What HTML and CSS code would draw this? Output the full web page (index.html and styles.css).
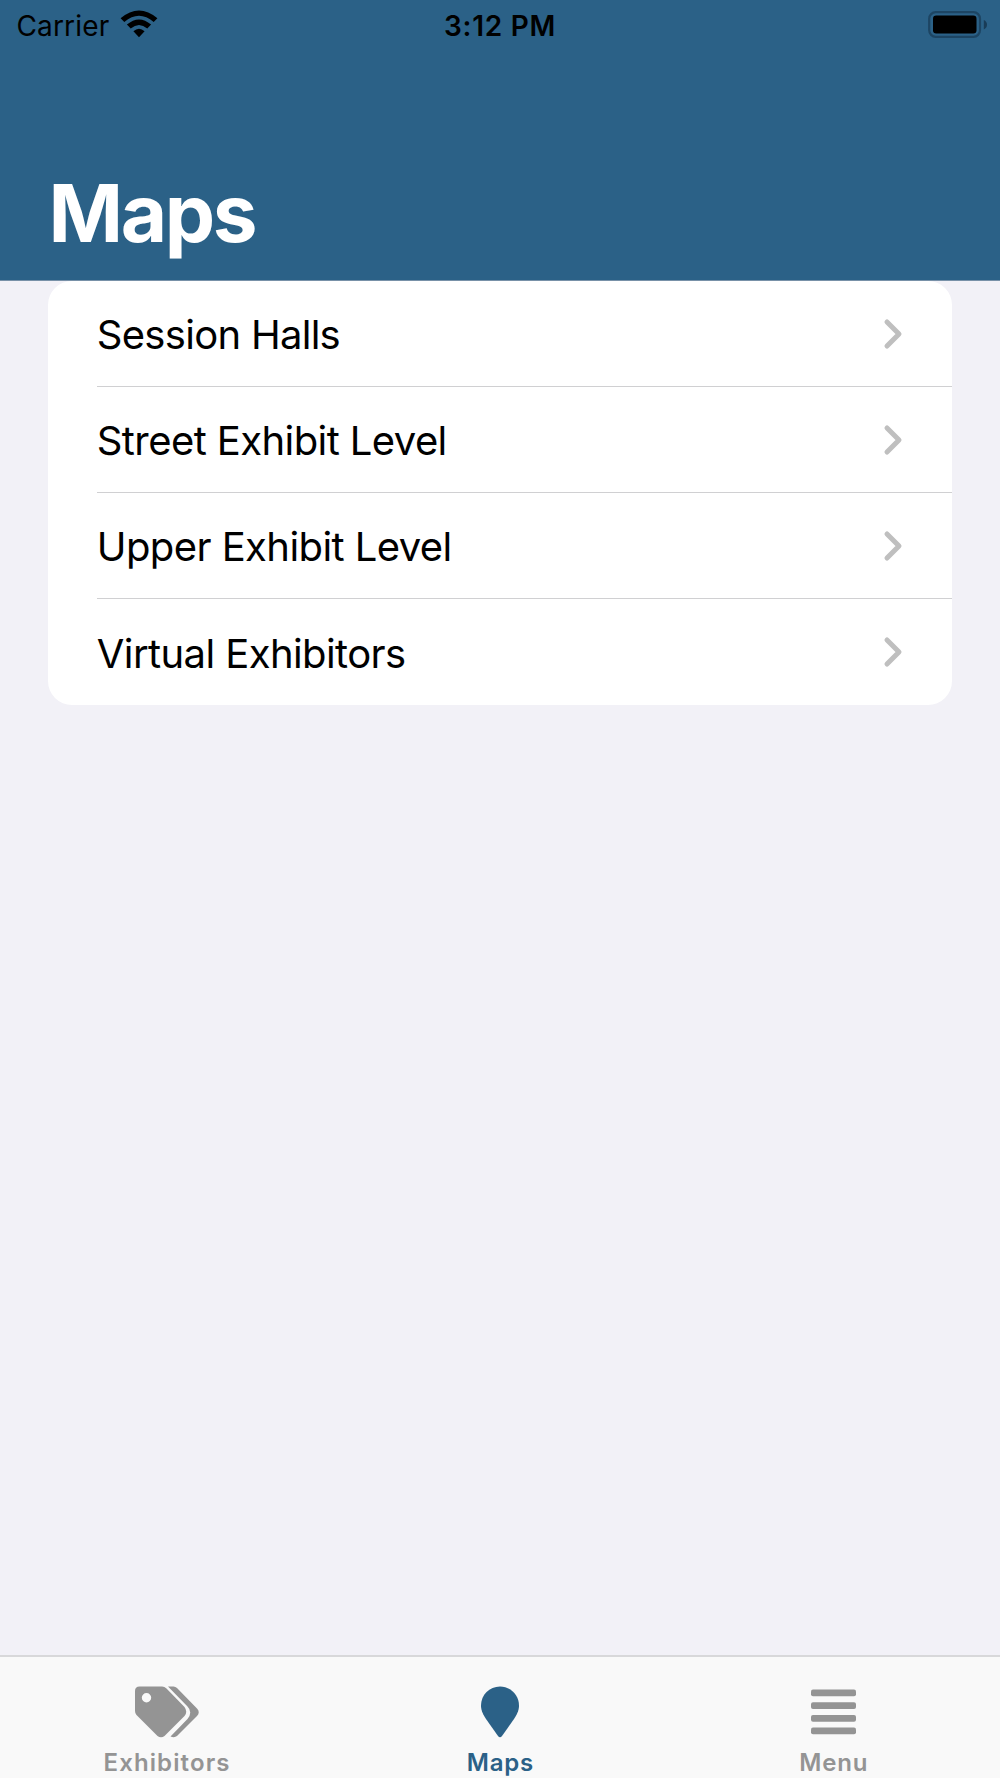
FILE: index.html
```html
<!DOCTYPE html>
<html lang="en">
<head>
<meta charset="utf-8">
<title>Maps</title>
<link rel="stylesheet" href="styles.css">
</head>
<body>
<div class="app">
  <header class="header">
    <div class="status">
      <div class="status-left">
        <span class="carrier">Carrier</span>
        <svg class="wifi" width="38" height="28" viewBox="0 0 38 28">
          <path d="M19 27.2 13.4 21.2Q19 16.2 24.6 21.2ZM6.9 14.6Q19 4.3 31.1 14.6L27.3 18.6Q19 11.3 10.7 18.6ZM.6 8.3Q19-7.3 37.4 8.3L33.7 12.1Q19-.4 4.3 12.1Z"/>
        </svg>
      </div>
      <span class="time">3:12 PM</span>
      <svg class="battery" width="60" height="28" viewBox="0 0 60 28">
        <rect x="1.2" y="1.2" width="50.8" height="24.6" rx="6.5" fill="none" stroke="#1d4563" stroke-width="2.2"/>
        <rect x="5" y="4.500" width="43.5" height="18" rx="3.2"/>
        <path d="M55.8 9Q59 10.5 59 13.7T55.8 18.4Z" fill="#193c57"/>
      </svg>
    </div>
    <h1 class="title">Maps</h1>
  </header>
  <main class="content">
    <ul class="list">
      <li class="row"><span class="label wide">Session Halls</span><svg class="chevron" width="20" height="32" viewBox="0 0 20 32"><path d="M4 4 16 16 4 28"/></svg></li>
      <li class="row"><span class="label">Street Exhibit Level</span><svg class="chevron" width="20" height="32" viewBox="0 0 20 32"><path d="M4 4 16 16 4 28"/></svg></li>
      <li class="row"><span class="label">Upper Exhibit Level</span><svg class="chevron" width="20" height="32" viewBox="0 0 20 32"><path d="M4 4 16 16 4 28"/></svg></li>
      <li class="row"><span class="label">Virtual Exhibitors</span><svg class="chevron" width="20" height="32" viewBox="0 0 20 32"><path d="M4 4 16 16 4 28"/></svg></li>
    </ul>
  </main>
  <nav class="tabs">
    <a class="tab">
      <svg width="64" height="52" viewBox="0 0 64 52"><path fill-rule="evenodd" d="M4.500 .500H27Q29.500 .500 31.500 2.500L49.500 21Q53 26 49.500 30L29.500 50Q26 52.500 22.500 50L1.500 29Q0 27.500 0 25V5Q0 .500 4.500 .500ZM11.500 7A4.700 4.700 0 1 0 11.500 16.400 4.700 4.700 0 1 0 11.500 7Z"/><path d="M33 .500H38.500Q40.500 .500 42 2L62 22.500Q65.500 26 62 30L42 50Q39.500 52 35.500 50.500L52.500 33Q58 26 52.500 20.500Z"/></svg>
      <span class="tab-label long">Exhibitors</span>
    </a>
    <a class="tab active">
      <svg width="38" height="52" viewBox="0 0 38 52"><path d="M19 .500C29.500 .500 38 9 38 19.500 38 25 35.500 29 33 33L21 50Q19 52.500 17 50L5 33C2.500 29 0 25 0 19.500 0 9 8.500 .500 19 .500Z"/></svg>
      <span class="tab-label">Maps</span>
    </a>
    <a class="tab">
      <svg width="45" height="52" viewBox="0 0 45 52"><rect y="3.500" width="45" height="6.800" rx="2"/><rect y="16.200" width="45" height="6.800" rx="2"/><rect y="28.900" width="45" height="6.800" rx="2"/><rect y="41.500" width="45" height="6.800" rx="2"/></svg>
      <span class="tab-label">Menu</span>
    </a>
  </nav>
</div>
</body>
</html>
```
FILE: styles.css
```css
* { box-sizing: border-box; }
body { margin: 0; background: #f2f1f7; color: #000; font-family: Inter, "Liberation Sans", sans-serif; }
.app { display: flex; flex-direction: column; height: 1778px; overflow: hidden; }
.header { display: flex; flex-direction: column; justify-content: space-between; height: 281px; background: #2b6187; border-bottom: 1px solid #7891a8; }
.status { display: grid; grid-template-columns: 1fr auto 1fr; align-items: center; height: 50px; padding: 0 16px; font-size: 28px; line-height: 48px; }
.status-left { display: flex; align-items: center; gap: 10.500px; }
.carrier { padding: 2px 0 0 0.500px; letter-spacing: 0.15px; }
.wifi { margin-bottom: 2px; }
.time { padding-top: 2px; font-weight: 600; letter-spacing: 0.75px; }
.battery { justify-self: end; margin-right: -4px; }
.title { margin: 0 0 17px; padding-left: 48.500px; color: #fff; font-size: 80px; font-weight: 700; line-height: 100px; letter-spacing: -2.4px; }
.content { flex: 1; padding: 0 48.300px; }
.list { margin: 0; padding: 0; list-style: none; background: #fff; border-radius: 24px; }
.row { display: flex; align-items: center; justify-content: space-between; height: 106px; margin-left: 48.500px; padding-right: 48.700px; border-bottom: 1px solid #d0d0d2; font-size: 40px; }
.row:last-child { border-bottom: 0; }
.label { margin-top: 2px; letter-spacing: -0.59px; }
.wide { letter-spacing: -0.71px; }
.chevron { fill: none; stroke: #bfbfbf; stroke-width: 5; stroke-linecap: round; stroke-linejoin: round; }
.tabs { display: grid; grid-template-columns: repeat(3, 1fr); height: 123px; padding-top: 29px; background: #f9f9f9; border-top: 2px solid #d8d8da; }
.tab { display: flex; flex-direction: column; align-items: center; gap: 10px; color: #949494; fill: currentColor; font-size: 24px; font-weight: 600; line-height: 30px; }
.tab-label { padding-left: 0.800px; letter-spacing: 0.800px; }
.long { letter-spacing: 1.1px; }
.active { color: #2b6187; }
```
